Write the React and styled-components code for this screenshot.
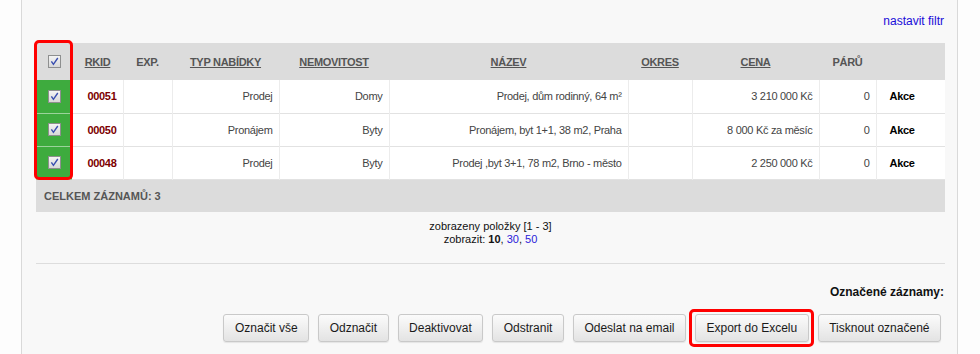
import React from "react";
import styled, { createGlobalStyle } from "styled-components";

const GlobalStyle = createGlobalStyle`
  html, body {
    margin: 0;
    padding: 0;
    background: #ffffff;
    font-family: "Liberation Sans", Arial, sans-serif;
  }
`;

const columns = [
  { key: "check", width: 36 },
  { key: "rkid", width: 51, label: "RKID", link: true },
  { key: "exp", width: 49, label: "EXP." },
  { key: "typ", width: 107, label: "TYP NABÍDKY", link: true },
  { key: "nem", width: 110, label: "NEMOVITOST", link: true },
  { key: "nazev", width: 239, label: "NÁZEV", link: true },
  { key: "okres", width: 64, label: "OKRES", link: true },
  { key: "cena", width: 127, label: "CENA", link: true },
  { key: "paru", width: 57, label: "PÁRŮ" },
  { key: "akce", width: 69 },
];

const rows = [
  { rkid: "00051", typ: "Prodej", nem: "Domy", nazev: "Prodej, dům rodinný, 64 m²", cena: "3 210 000 Kč", paru: "0" },
  { rkid: "00050", typ: "Pronájem", nem: "Byty", nazev: "Pronájem, byt 1+1, 38 m2, Praha", cena: "8 000 Kč za měsíc", paru: "0" },
  { rkid: "00048", typ: "Prodej", nem: "Byty", nazev: "Prodej ,byt 3+1, 78 m2, Brno - město", cena: "2 250 000 Kč", paru: "0" },
];

const buttons = [
  "Označit vše",
  "Odznačit",
  "Deaktivovat",
  "Odstranit",
  "Odeslat na email",
  "Export do Excelu",
  "Tisknout označené",
];

function CheckBox() {
  return (
    <Box>
      <svg width="9" height="9" viewBox="0 0 9 9">
        <path d="M1.4 4.4 L3.4 7.3 L7.8 1" fill="none" stroke="#3a4fb0" strokeWidth="1.4" />
      </svg>
    </Box>
  );
}

export default function App() {
  return (
    <>
      <GlobalStyle />
      <Page>
        <Panel>
          <FilterBar>
            <FilterLink href="#">nastavit filtr</FilterLink>
          </FilterBar>

          <TableWrap>
            <Table>
              <colgroup>
                {columns.map((c) => (
                  <col key={c.key} style={{ width: c.width }} />
                ))}
              </colgroup>
              <thead>
                <tr>
                  {columns.map((c) => (
                    <HeadCell key={c.key}>
                      {c.key === "check" ? <CheckBox /> : c.link ? <HeadLink>{c.label}</HeadLink> : c.label}
                    </HeadCell>
                  ))}
                </tr>
              </thead>
              <tbody>
                {rows.map((r) => (
                  <Row key={r.rkid}>
                    <CheckCell>
                      <CheckBox />
                    </CheckCell>
                    <Cell><Rkid>{r.rkid}</Rkid></Cell>
                    <Cell />
                    <Cell>{r.typ}</Cell>
                    <Cell>{r.nem}</Cell>
                    <Cell>{r.nazev}</Cell>
                    <Cell />
                    <Cell>{r.cena}</Cell>
                    <Cell>{r.paru}</Cell>
                    <ActionCell>Akce</ActionCell>
                  </Row>
                ))}
              </tbody>
              <tfoot>
                <tr>
                  <TotalCell colSpan={10}>CELKEM ZÁZNAMŮ: 3</TotalCell>
                </tr>
              </tfoot>
            </Table>
            <ColumnHighlight />
          </TableWrap>

          <Pager>
            <div>zobrazeny položky [1 - 3]</div>
            <div>
              zobrazit: <b>10</b>, <PagerLink href="#">30</PagerLink>, <PagerLink href="#">50</PagerLink>
            </div>
          </Pager>

          <MarkedLabel>Označené záznamy:</MarkedLabel>

          <ButtonRow>
            {buttons.map((b) => (
              <Button key={b} $highlight={b === "Export do Excelu"}>
                {b}
              </Button>
            ))}
          </ButtonRow>
        </Panel>
      </Page>
    </>
  );
}

const Page = styled.div`
  display: flex;
  height: 354px;
  padding-left: 21px;
  overflow: hidden;
  background: #fdfdfd;
`;

const Panel = styled.div`
  width: 909px;
  padding: 0 12px 0 14px;
  background: #f8f8f8;
  border-left: 1px solid #d9d9d9;
  border-right: 1px solid #d9d9d9;
`;

const FilterBar = styled.div`
  text-align: right;
  padding: 14px 1px 0 0;
  height: 29px;
  box-sizing: border-box;
  font-size: 12px;
  line-height: 14px;
`;

const FilterLink = styled.a`
  color: #1a0dd8;
  text-decoration: none;
`;

const TableWrap = styled.div`
  position: relative;
  margin-top: 14px;
`;

const Table = styled.table`
  width: 909px;
  border-collapse: collapse;
  table-layout: fixed;
  font-size: 11px;
  letter-spacing: -0.3px;
`;

const HeadCell = styled.th`
  height: 37px;
  padding: 0;
  background: #dcdcdc;
  color: #555555;
  font-weight: bold;
  text-align: center;
  vertical-align: middle;
`;

const HeadLink = styled.span`
  text-decoration: underline;
  color: #555555;
`;

const Row = styled.tr`
  height: 33px;
  background: #ffffff;
  border-bottom: 1px solid #e2e2e2;
`;

const Cell = styled.td`
  padding: 0 6px;
  text-align: right;
  color: #444444;
  white-space: nowrap;
  border-right: 1px solid #ececec;
  vertical-align: middle;
`;

const CheckCell = styled.td`
  padding: 0;
  background: #3eab3e;
  border-bottom: 1px solid #9bd39b;
  text-align: center;
  vertical-align: middle;
`;

const Rkid = styled.span`
  color: #7d0000;
  font-weight: bold;
`;

const ActionCell = styled.td`
  padding: 0 0 0 13px;
  color: #000000;
  font-weight: bold;
  text-align: left;
  vertical-align: middle;
`;

const TotalCell = styled.td`
  height: 32px;
  padding: 0 8px;
  background: #dcdcdc;
  color: #555555;
  font-weight: bold;
  letter-spacing: 0;
  vertical-align: middle;
`;

const Box = styled.span`
  display: inline-flex;
  align-items: center;
  justify-content: center;
  width: 13px;
  height: 13px;
  box-sizing: border-box;
  border: 1px solid #8e8f8f;
  background: linear-gradient(#f4f4f4, #d8d8d8);
  vertical-align: middle;
`;

const ColumnHighlight = styled.div`
  position: absolute;
  left: -2px;
  top: -3px;
  width: 39px;
  height: 140px;
  box-sizing: border-box;
  border: 3px solid #ff0000;
  border-radius: 5px;
  pointer-events: none;
`;

const Pager = styled.div`
  height: 52px;
  box-sizing: border-box;
  padding-top: 8px;
  border-bottom: 1px solid #dddddd;
  text-align: center;
  font-size: 11px;
  line-height: 13px;
  color: #111111;
`;

const PagerLink = styled.a`
  color: #2a1ad8;
  text-decoration: none;
`;

const MarkedLabel = styled.div`
  margin-top: 21px;
  padding-right: 1px;
  text-align: right;
  font-size: 12px;
  line-height: 14px;
  font-weight: bold;
  color: #111111;
`;

const ButtonRow = styled.div`
  display: flex;
  justify-content: flex-end;
  gap: 9px;
  margin-top: 15px;
  padding-right: 4px;
`;

const Button = styled.button`
  position: relative;
  height: 28px;
  padding: 0 10.5px;
  border: 1px solid #c9c9c9;
  border-radius: 3px;
  background: linear-gradient(#fbfbfb, #e3e3e3);
  box-shadow: 0 1px 1px rgba(0, 0, 0, 0.08);
  font-family: "Liberation Sans", Arial, sans-serif;
  font-size: 12px;
  color: #1a1a1a;
  white-space: nowrap;

  &::after {
    content: "";
    display: ${(p) => (p.$highlight ? "block" : "none")};
    position: absolute;
    top: -6px;
    bottom: -6px;
    left: -7px;
    right: -6px;
    border: 3px solid #ff0000;
    border-radius: 5px;
  }
`;
